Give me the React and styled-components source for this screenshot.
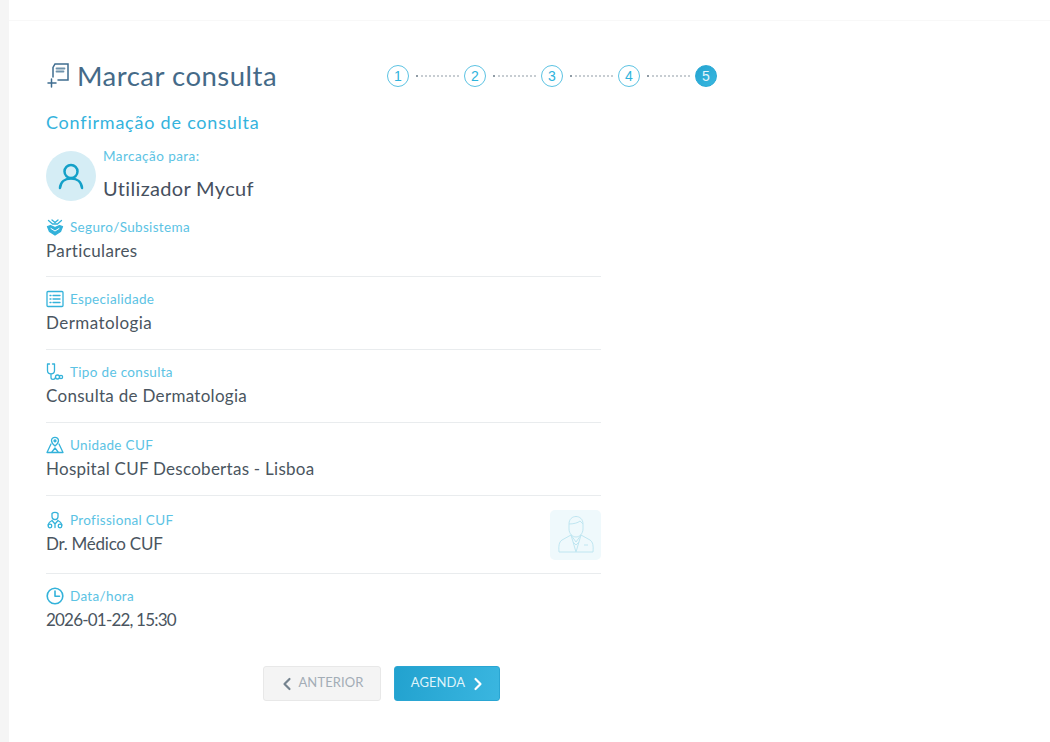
import React from "react";
import styled, { createGlobalStyle } from "styled-components";
import { ChevronLeft, ChevronRight } from "lucide-react";

const Global = createGlobalStyle`
  html, body { margin: 0; padding: 0; background: #fff; }
  body { font-family: Lato, "Open Sans", sans-serif; color: #4a5560; }
  * { box-sizing: border-box; }
`;
const Page = styled.div`
  width: 1050px; height: 742px; overflow: hidden;
  border-left: 9px solid #f5f5f5; background: #fff;
`;
const TopBar = styled.div`height: 21px; border-bottom: 1px solid #f8f8f8;`;
const Content = styled.main`padding: 35px 0 0 37px; width: 592px;`;
const Header = styled.header`display: flex; align-items: center; height: 40px;`;
const Title = styled.h1`
  display: flex; align-items: center; gap: 5px; flex: none; width: 341px; margin: 0; padding-bottom: 2px;
  font-size: 27.5px; font-weight: 400; color: #456a88; letter-spacing: .5px; white-space: nowrap;
`;
const Stepper = styled.ol`display: flex; align-items: center; flex: none; margin: 0; padding: 0; list-style: none;`;
const Step = styled.li`
  width: 22px; height: 22px; border-radius: 50%; display: flex; align-items: center; justify-content: center; flex: none;
  border: 1.5px solid ${p => p.$active ? "#29a9d6" : "#5cc3e3"};
  background: ${p => p.$active ? "linear-gradient(135deg,#24a3d0,#39b8e0)" : "#fff"};
  color: ${p => p.$active ? "#e4f5fb" : "#2fb3dc"};
  font: 14px "Liberation Sans", sans-serif;
`;
const Dots = styled.li`
  width: 43px; flex: none; margin: 0 5px 0 7px; border-top: 2px dotted #8f9ba5; height: 0; transform: scaleY(.6);
`;
const Subtitle = styled.h2`
  margin: 14px 0 0; font-size: 18px; line-height: 24px; font-weight: 400; color: #34b3dd; letter-spacing: .78px;
`;
const Patient = styled.section`display: flex; gap: 7px; height: 67px; margin-top: 13px;`;
const Avatar = styled.div`
  width: 50px; height: 50px; margin-top: 4px; border-radius: 50%; background: #d5edf5;
  display: flex; align-items: center; justify-content: center; flex: none;
`;
const PatientText = styled.div`display: flex; flex-direction: column;`;
const SmallLabel = styled.span`font-size: 13.5px; line-height: 18px; color: #5cc3e4; letter-spacing: .45px;`;
const PatientName = styled.span`margin-top: 10px; font-size: 20px; line-height: 26px; color: #46505e; letter-spacing: .33px;`;
const Row = styled.section`
  position: relative; height: ${p => p.$h || 73}px; padding-top: ${p => p.$pt || 13}px;
  border-bottom: ${p => p.$last ? "none" : "1px solid #e9ecee"};
`;
const Label = styled.div`
  display: flex; align-items: center; gap: 6px; height: 18px;
  font-size: 13.5px; color: #5cc3e4; letter-spacing: .33px;
`;
const IconBox = styled.span`width: 18px; height: 18px; display: flex; align-items: center; justify-content: center; flex: none;`;
const Value = styled.div`
  margin-top: 3px; font-size: 17px; line-height: 24px; color: #4a5560; white-space: nowrap;
  letter-spacing: ${p => p.$ls}px;
`;
const Doctor = styled.div`
  position: absolute; right: 0; top: 14px; width: 51px; height: 50px; border-radius: 5px; background: #eff9fc;
  display: flex; align-items: center; justify-content: center;
`;
const Actions = styled.div`display: flex; gap: 13px; margin: 21px 0 0 217px;`;
const Button = styled.button`
  height: 35px; width: ${p => p.$w}px; border-radius: 3px; display: flex; align-items: center; justify-content: center;
  gap: ${p => p.$primary ? 3 : 1}px;
  padding: 0 ${p => p.$primary ? 0 : 3}px 3px ${p => p.$primary ? 5 : 0}px;
  font: 400 13px Lato, sans-serif; letter-spacing: .1px;
  border: 1px solid ${p => p.$primary ? "#2aa6d3" : "#e8e8e8"};
  background: ${p => p.$primary ? "linear-gradient(100deg,#22a2cf,#3ab6e0)" : "#f4f4f4"};
  color: ${p => p.$primary ? "#dff3fa" : "#a3adb6"};
  svg { color: ${p => p.$primary ? "#fff" : "#75838f"}; margin-top: 3px; }
`;

const S = { fill: "none", stroke: "#33b2da", strokeWidth: 1.3, strokeLinecap: "round", strokeLinejoin: "round" };
const Svg = ({ children, s = 18 }) => <svg width={s} height={s} viewBox="0 0 18 18" {...S}>{children}</svg>;

const IconBook = () => (
  <svg width="26" height="26" viewBox="0 0 26 26" fill="none" stroke="#3f6d90" strokeWidth="1.500" strokeLinecap="round">
    <path d="M7 15V5.500L9 2h13v16H12" />
    <path d="M10.500 6.500h8M10.500 9.500h7" strokeWidth="1.800" stroke="#6f93ac" />
    <path d="M5.500 17v8M2 21h8" />
  </svg>
);
const IconShield = () => (
  <Svg>
    <path d="M2.500 2.500l4 3.500h5l4-3.500M6 2l3 2.500 3-2.500" />
    <path d="M1.500 8.500l3-1 4.500 2 4.500-2 3 1-2 5L9 17l-5.500-3.500z" fill="#33b2da" />
    <path d="M5 10.500l4 2.500 4-2.500" stroke="#fff" strokeWidth="1" />
  </Svg>
);
const IconList = () => (
  <Svg>
    <rect x="1" y="1.500" width="16" height="15" rx="1" />
    <path d="M4 5.500h1M4 9h1M4 12.500h1M7 5.500h7M7 9h7M7 12.500h7" />
  </Svg>
);
const IconSteth = () => (
  <Svg>
    <path d="M3.500 1H1.500v6.500c0 4.500 7 4.500 7 0V1H6.500" />
    <path d="M5 11.500v3c0 2.500 4 2.500 4.500 0" />
    <circle cx="11.500" cy="14" r="2" /><circle cx="15" cy="14" r="1.600" />
  </Svg>
);
const IconPin = () => (
  <Svg>
    <path d="M9 10C6 7.500 5.500 6 5.500 4.800a3.500 3.500 0 017 0C12.500 6 12 7.500 9 10z" />
    <circle cx="9" cy="4.800" r="1" fill="#33b2da" />
    <path d="M5 8L1 16.500h16L13 8M5.500 16.500L9 12l3.500 4.500" />
  </Svg>
);
const IconDoc = () => (
  <Svg>
    <path d="M6 2.500c1.500-1.500 4.500-1.500 6 0v3c0 4-6 4-6 0z" />
    <path d="M6 9.500C4 10.500 2.500 12 2 14M12 9.500c2 1 3.500 2.500 4 4.500M6 9.500L9 13l3-3.500M9 13v3.500" />
    <circle cx="4" cy="15" r="1.800" /><circle cx="14" cy="15" r="1.800" />
  </Svg>
);
const IconClock = () => (
  <Svg>
    <circle cx="9" cy="9" r="7.800" strokeWidth="1.600" />
    <path d="M9 4v5.200h4.500" strokeWidth="1.600" />
  </Svg>
);
const IconUser = () => (
  <svg width="26" height="28" viewBox="0 0 26 28" fill="none" stroke="#14a0c8" strokeWidth="2.500" strokeLinecap="round">
    <circle cx="13" cy="9.500" r="6.500" />
    <path d="M2 26c.5-6 5-9.500 11-9.500S23.500 20 24 26" />
  </svg>
);
const DoctorArt = () => (
  <svg width="36" height="40" viewBox="0 0 36 40" fill="none" stroke="#bfe6f1" strokeWidth="1">
    <path d="M11 9c0-10 14-10 14 0v5c0 5-4 8-7 8s-7-3-7-8z" />
    <path d="M11 9c4 0 9-1 11-3 1 1 2 2 3 3" />
    <path d="M13 20L4 25c-3 2-3.500 6-3 12h34c.5-6 0-10-3-12l-9-5-5 7z" />
    <path d="M13 20l5 17 5-17M15 27l3 3 3-3M26 30h4" />
  </svg>
);

const rows = [
  { icon: <IconShield />, label: "Seguro/Subsistema", value: "Particulares", ls: .38, h: 63, pt: 4 },
  { icon: <IconList />, label: "Especialidade", value: "Dermatologia", ls: .44 },
  { icon: <IconSteth />, label: "Tipo de consulta", value: "Consulta de Dermatologia", ls: .3 },
  { icon: <IconPin />, label: "Unidade CUF", value: "Hospital CUF Descobertas - Lisboa", ls: .26 },
  { icon: <IconDoc />, label: "Profissional CUF", value: "Dr. Médico CUF", ls: -.26, h: 78, pt: 15, doctor: true },
  { icon: <IconClock />, label: "Data/hora", value: "2026-01-22, 15:30", ls: -.8, h: 71, pt: 13, last: true },
];

export default function App() {
  return (
    <Page>
      <Global />
      <TopBar />
      <Content>
        <Header>
          <Title><IconBook />Marcar consulta</Title>
          <Stepper>
            {[1, 2, 3, 4, 5].map(n => (
              <React.Fragment key={n}>
                <Step $active={n === 5}>{n}</Step>
                {n < 5 && <Dots />}
              </React.Fragment>
            ))}
          </Stepper>
        </Header>
        <Subtitle>Confirmação de consulta</Subtitle>
        <Patient>
          <Avatar><IconUser /></Avatar>
          <PatientText>
            <SmallLabel>Marcação para:</SmallLabel>
            <PatientName>Utilizador Mycuf</PatientName>
          </PatientText>
        </Patient>
        {rows.map(r => (
          <Row key={r.label} $h={r.h} $pt={r.pt} $last={r.last}>
            <Label><IconBox>{r.icon}</IconBox>{r.label}</Label>
            <Value $ls={r.ls}>{r.value}</Value>
            {r.doctor && <Doctor><DoctorArt /></Doctor>}
          </Row>
        ))}
        <Actions>
          <Button $w={118}><ChevronLeft size={20} strokeWidth={2.6} />ANTERIOR</Button>
          <Button $w={106} $primary>AGENDA<ChevronRight size={20} strokeWidth={2.6} /></Button>
        </Actions>
      </Content>
    </Page>
  );
}
